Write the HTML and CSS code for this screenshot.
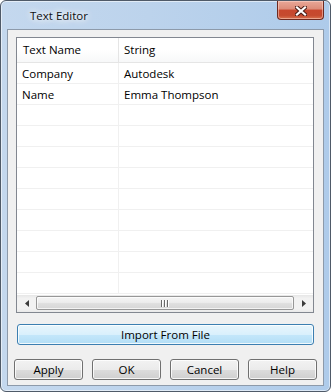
FILE: index.html
```html
<!DOCTYPE html>
<html>
<head>
<meta charset="utf-8">
<link rel="stylesheet" href="styles.css">
</head>
<body>
<div class="window">
  <div class="titlebar">
    <span class="title">Text Editor</span>
    <div class="close">
      <svg width="12" height="10" viewBox="0 0 12 10">
        <path d="M2 1.5 L10 8.5 M10 1.5 L2 8.5" stroke="#4a1d16" stroke-width="4.2" stroke-linecap="square"/>
        <path d="M2 1.5 L10 8.5 M10 1.5 L2 8.5" stroke="#ffffff" stroke-width="2.2" stroke-linecap="square"/>
      </svg>
    </div>
  </div>
  <div class="client">
    <div class="list">
      <div class="header">
        <div class="cell c1">Text Name</div>
        <div class="cell c2">String</div>
      </div>
      <div class="rows">
        <div class="row"><div class="cell c1">Company</div><div class="cell c2">Autodesk</div></div>
        <div class="row"><div class="cell c1">Name</div><div class="cell c2">Emma Thompson</div></div>
        <div class="row"><div class="cell c1"></div><div class="cell c2"></div></div>
        <div class="row"><div class="cell c1"></div><div class="cell c2"></div></div>
        <div class="row"><div class="cell c1"></div><div class="cell c2"></div></div>
        <div class="row"><div class="cell c1"></div><div class="cell c2"></div></div>
        <div class="row"><div class="cell c1"></div><div class="cell c2"></div></div>
        <div class="row"><div class="cell c1"></div><div class="cell c2"></div></div>
        <div class="row"><div class="cell c1"></div><div class="cell c2"></div></div>
        <div class="row"><div class="cell c1"></div><div class="cell c2"></div></div>
        <div class="row"><div class="cell c1"></div><div class="cell c2"></div></div>
      </div>
      <div class="hscroll">
        <div class="arrow">
          <svg width="4" height="7" viewBox="0 0 4 7"><path d="M4 0 L0 3.5 L4 7 Z" fill="#3b3b3b"/></svg>
        </div>
        <div class="thumb">
          <svg width="8" height="7" viewBox="0 0 8 7">
            <rect x="0" y="0" width="1" height="7" fill="#6a6a6a"/><rect x="1" y="0" width="1" height="7" fill="#fff"/>
            <rect x="3" y="0" width="1" height="7" fill="#6a6a6a"/><rect x="4" y="0" width="1" height="7" fill="#fff"/>
            <rect x="6" y="0" width="1" height="7" fill="#6a6a6a"/><rect x="7" y="0" width="1" height="7" fill="#fff"/>
          </svg>
        </div>
        <div class="arrow">
          <svg width="4" height="7" viewBox="0 0 4 7"><path d="M0 0 L4 3.5 L0 7 Z" fill="#3b3b3b"/></svg>
        </div>
      </div>
    </div>
    <button class="btn import">Import From File</button>
    <div class="buttons">
      <button class="btn">Apply</button>
      <button class="btn">OK</button>
      <button class="btn">Cancel</button>
      <button class="btn">Help</button>
    </div>
  </div>
</div>
</body>
</html>
```
FILE: styles.css
```css
html, body {
  margin: 0;
  padding: 0;
  background: #ffffff;
}
body {
  font-family: "Open Sans", "Noto Sans", sans-serif;
  font-size: 11.5px;
  color: #000;
}
.window {
  width: 331px;
  height: 392px;
  box-sizing: border-box;
  border: 1px solid #4f5a68;
  border-radius: 6px;
  padding: 0 6px 5px 6px;
  display: flex;
  flex-direction: column;
  background: linear-gradient(to right, #c4d8ee 0%, #bcd3ec 45%, #aecbea 100%);
  box-shadow: inset 0 0 0 1px rgba(255,255,255,0.55);
}
.titlebar {
  height: 28px;
  display: flex;
  justify-content: space-between;
  align-items: flex-start;
}
.title {
  margin-top: 6px;
  padding-left: 23px;
  color: #111;
  font-size: 11.5px;
  line-height: 17px;
  text-shadow: 0 0 8px #ffffff, 0 0 5px rgba(255,255,255,0.9), 0 0 12px rgba(255,255,255,0.8);
}
.close {
  width: 47px;
  height: 19px;
  box-sizing: border-box;
  border: 1px solid #6e2a20;
  border-top: none;
  border-radius: 0 0 4px 4px;
  background: linear-gradient(to bottom, #e9a898 0%, #dd8b78 45%, #c8472e 50%, #c54a2f 80%, #d8724f 100%);
  box-shadow: inset 0 0 0 1px rgba(255,220,210,0.5);
  display: flex;
  align-items: center;
  justify-content: center;
}
.close svg { display: block; margin-top: 1px; }
.client {
  flex: 1;
  border: 1px solid #8d9aaa;
  background: #f0f0f0;
  padding: 7px 6px 5px 6px;
  display: flex;
  flex-direction: column;
  box-sizing: border-box;
}
.list {
  height: 276px;
  box-sizing: border-box;
  margin: 0 3px 0 2px;
  border: 1px solid #828790;
  background: #ffffff;
  display: flex;
  flex-direction: column;
  overflow: hidden;
}
.header {
  height: 25px;
  box-sizing: border-box;
  border-bottom: 1px solid #e5e5e5;
  background: linear-gradient(to bottom, #ffffff 0%, #ffffff 50%, #f7f8f9 100%);
  display: flex;
}
.cell {
  box-sizing: border-box;
  white-space: nowrap;
}
.c1 {
  width: 102px;
  border-right: 1px solid #e5e5e5;
  padding-left: 6px;
}
.c2 {
  flex: 1;
  padding-left: 5px;
}
.header .cell {
  line-height: 24px;
}
.rows {
  flex: 1;
  overflow: hidden;
}
.row {
  height: 21px;
  box-sizing: border-box;
  border-bottom: 1px solid #f0f0f0;
  display: flex;
}
.row .cell {
  line-height: 21px;
}
.row .c1 {
  border-right-color: #f0f0f0;
  padding-left: 5px;
}
.hscroll {
  height: 17px;
  display: flex;
  background: linear-gradient(to bottom, #e6e6e6 0%, #f2f2f2 20%, #f2f2f2 80%, #e9e9e9 100%);
}
.arrow {
  width: 19px;
  display: flex;
  align-items: center;
  justify-content: center;
}
.arrow svg { display: block; }
.thumb {
  flex: 1;
  margin: 1px 0 2px 0;
  box-sizing: border-box;
  border: 1px solid #979797;
  border-radius: 2px;
  background: linear-gradient(to bottom, #f4f4f4 0%, #ededed 45%, #dfdfdf 55%, #d6d6d6 100%);
  box-shadow: inset 0 0 0 1px rgba(255,255,255,0.7);
  display: flex;
  align-items: center;
  justify-content: center;
}
.thumb svg { display: block; }
.btn {
  font-family: "Open Sans", "Noto Sans", sans-serif;
  font-size: 11.5px;
  color: #000;
  height: 21px;
  box-sizing: border-box;
  padding: 0;
  margin: 0;
  border: 1px solid #707070;
  border-radius: 3px;
  background: linear-gradient(to bottom, #f2f2f2 0%, #ebebeb 50%, #dddddd 51%, #cfcfcf 100%);
  box-shadow: inset 0 0 0 1px rgba(255,255,255,0.8);
  line-height: 18px;
}
.import {
  margin: 11px 3px 0 3px;
  border-color: #3c7fb1;
  background: linear-gradient(to bottom, #e8f5fc 0%, #d9f0fc 50%, #c4e7fa 51%, #b3def6 100%);
}
.buttons {
  margin-top: 14px;
  display: flex;
  gap: 9px;
}
.buttons .btn {
  width: 69px;
}
```
